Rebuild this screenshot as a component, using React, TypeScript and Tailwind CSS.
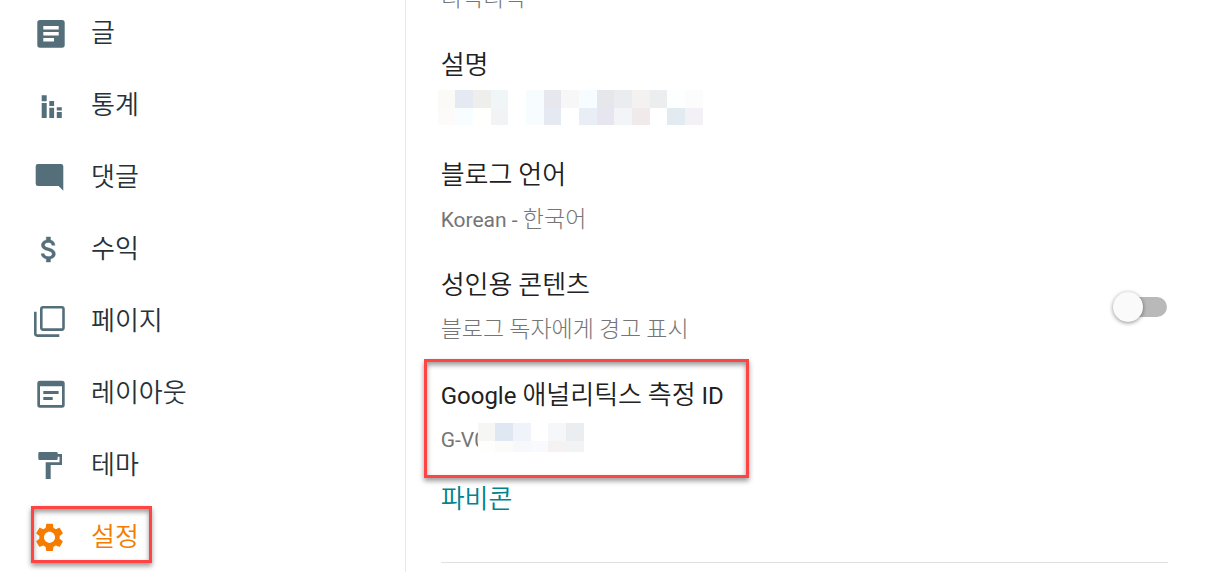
import { ReactNode, useState } from "react";

interface NavItem {
  label: string;
  icon: ReactNode;
  active?: boolean;
}

const NAV_ITEMS: NavItem[] = [
  {
    label: "글",
    icon: (
      <path
        fillRule="evenodd"
        d="M8 4h22a2.7 2.7 0 0 1 2.7 2.7v22.3a2.7 2.7 0 0 1-2.7 2.7H8a2.7 2.7 0 0 1-2.7-2.7V6.7A2.7 2.7 0 0 1 8 4zM11.3 10v3.5h15.4V10zM11.3 16v3.5h15.4V16zM11.3 22v3.5H22V22z"
      />
    ),
  },
  {
    label: "통계",
    icon: (
      <path d="M9.7 7.3h5v6h-5zM9.7 15h5v15h-5zM17.3 13h4.8v5h-4.8zM17.3 19.7h4.8V30h-4.8zM24.8 19.2h5v3.2h-5zM24.8 24h5v6h-5z" />
    ),
  },
  {
    label: "댓글",
    icon: (
      <path d="M6 4h23a2.3 2.3 0 0 1 2.3 2.3v24.5L26.6 26H6a2.3 2.3 0 0 1-2.3-2.3V6.3A2.3 2.3 0 0 1 6 4z" />
    ),
  },
  {
    label: "수익",
    icon: (
      <path
        transform="translate(0.4 0.8) scale(1.39)"
        stroke="currentColor"
        strokeWidth="0.3"
        d="M11.8 10.9c-2.27-.59-3-1.2-3-2.15 0-1.09 1.01-1.85 2.7-1.85 1.78 0 2.44.85 2.5 2.1h2.21c-.07-1.72-1.12-3.3-3.21-3.81V3h-3v2.16c-1.94.42-3.5 1.68-3.5 3.61 0 2.31 1.91 3.46 4.7 4.13 2.5.6 3 1.48 3 2.41 0 .69-.49 1.79-2.7 1.79-2.06 0-2.87-.92-2.98-2.1h-2.2c.12 2.19 1.76 3.42 3.68 3.83V21h3v-2.15c1.95-.37 3.5-1.5 3.5-3.55 0-2.84-2.43-3.81-4.7-4.4z"
      />
    ),
  },
  {
    label: "페이지",
    icon: (
      <g fill="none" stroke="currentColor" strokeWidth="2.6">
        <rect x="9.3" y="3.2" width="22.2" height="22.4" rx="1.8" />
        <path d="M3.3 7.7V29.6a2 2 0 0 0 2 2H27.3" />
      </g>
    ),
  },
  {
    label: "레이아웃",
    icon: (
      <path
        fillRule="evenodd"
        d="M8 4.7h22a2.7 2.7 0 0 1 2.7 2.7V29a2.7 2.7 0 0 1-2.7 2.7H8A2.7 2.7 0 0 1 5.3 29V7.4A2.7 2.7 0 0 1 8 4.7zM8 10.3V29h22V10.3zM11.3 15h15.3v3H11.3zM11.3 21h9.4v3h-9.4z"
      />
    ),
  },
  {
    label: "테마",
    icon: (
      <path d="M7.6 4h16.8a1.3 1.3 0 0 1 1.3 1.3V6H30v11H18.7v14h-5V14.3h13.8V8.7h-1.8v2a1.3 1.3 0 0 1-1.3 1.3H7.6a1.3 1.3 0 0 1-1.3-1.3V5.3A1.3 1.3 0 0 1 7.6 4z" />
    ),
  },
  {
    label: "설정",
    active: true,
    icon: (
      <path
        transform="translate(0.5 0.3) scale(1.42)"
        d="M19.14 12.94c.04-.3.06-.61.06-.94 0-.32-.02-.64-.07-.94l2.03-1.58c.18-.14.23-.41.12-.61l-1.92-3.32c-.12-.22-.37-.29-.59-.22l-2.39.96c-.5-.38-1.03-.7-1.62-.94l-.36-2.54c-.04-.24-.24-.41-.48-.41h-3.84c-.24 0-.43.17-.47.41l-.36 2.54c-.59.24-1.13.57-1.62.94l-2.39-.96c-.22-.08-.47 0-.59.22L2.74 8.87c-.12.21-.08.47.12.61l2.03 1.58c-.05.3-.09.63-.09.94s.02.64.07.94l-2.03 1.58c-.18.14-.23.41-.12.61l1.92 3.32c.12.22.37.29.59.22l2.39-.96c.5.38 1.03.7 1.62.94l.36 2.54c.05.24.24.41.48.41h3.84c.24 0 .44-.17.47-.41l.36-2.54c.59-.24 1.13-.56 1.62-.94l2.39.96c.22.08.47 0 .59-.22l1.92-3.32c.12-.22.07-.47-.12-.61l-2.01-1.58zM12 15.9c-2.15 0-3.9-1.75-3.9-3.9s1.75-3.9 3.9-3.9 3.9 1.75 3.9 3.9-1.75 3.9-3.9 3.9z"
      />
    ),
  },
];

const DESCRIPTION_CELLS = [
  "bg-[#fbfaf6]", "bg-[#e4e9f2]", "bg-[#eeeeec]", "bg-[#f0f5f8]", "bg-white",
  "bg-[#f7fcff]", "bg-[#e7e8ed]", "bg-[#f7f7f7]", "bg-[#f6fcff]", "bg-[#e5e7eb]",
  "bg-[#eaecef]", "bg-[#f4f2f0]", "bg-[#ebedee]", "bg-[#fdffff]", "bg-[#fcfcfc]",
  "bg-[#fcfbfa]", "bg-[#f8fdff]", "bg-[#fffffd]", "bg-[#f2f3f4]", "bg-white",
  "bg-[#f7fcff]", "bg-[#e5e9f2]", "bg-white", "bg-[#e9edf6]", "bg-[#e7e6f0]",
  "bg-[#f2f4f8]", "bg-[#f0ebea]", "bg-white", "bg-[#e1ebf1]", "bg-[#f3f1f6]",
];

const ID_CELLS = [
  "bg-[#f6f6f4]", "bg-[#dfe8f2]", "bg-[#f0f4fa]", "bg-white", "bg-[#f6f7f9]", "bg-[#eaeef1]",
  "bg-[#fefefc]", "bg-[#fbfbf9]", "bg-[#f7f8fb]", "bg-[#f9fafd]", "bg-[#f6f2f1]", "bg-[#f1f3f5]",
];

const HIGHLIGHT =
  "pointer-events-none absolute border-3 border-[#ff4444] shadow-[0_3px_5px_rgba(0,0,0,0.4),inset_0_3px_5px_rgba(0,0,0,0.4)]";

function Sidebar() {
  return (
    <nav className="w-1/3 shrink-0 border-r border-[#e8e8e8]">
      <ul className="-mt-0.5">
        {NAV_ITEMS.map((item) => (
          <li key={item.label} className="relative">
            <a
              href="#"
              className={`flex h-18 items-center gap-[23px] pl-8 text-[26px] ${
                item.active ? "text-[#f57c00]" : "text-[#263238]"
              }`}
            >
              <svg
                viewBox="0 0 36 36"
                fill="currentColor"
                aria-hidden="true"
                className={`size-9 shrink-0 ${item.active ? "" : "text-[#546e7a]"}`}
              >
                {item.icon}
              </svg>
              <span className="pb-1.5 leading-9">{item.label}</span>
            </a>
            {item.active && <div className={`${HIGHLIGHT} top-1 left-[31px] h-[57px] w-[121px]`} />}
          </li>
        ))}
      </ul>
    </nav>
  );
}

function Setting({ title, children }: { title: ReactNode; children: ReactNode }) {
  return (
    <div className="mb-5">
      <h2 className="text-[26px] leading-[45px] text-[#212121]">{title}</h2>
      <div className="h-[45px] text-[23px] leading-[45px] font-light text-[#757575]">{children}</div>
    </div>
  );
}

export default function App() {
  const [adult, setAdult] = useState(false);

  return (
    <div className="flex h-screen overflow-hidden bg-white font-['Noto_Sans_CJK_KR',sans-serif] font-[350]">
      <Sidebar />
      <main className="min-w-0 flex-1 pr-[49px] pl-[35px]">
        <div className="-mt-[26px] mb-[21px] h-[45px] text-[23px] leading-[45px] font-light text-[#757575]">
          디덕디덕
        </div>

        <Setting title="설명">
          <div className="-ml-[3px] grid w-[265px] grid-cols-15 grid-rows-[18px_17px] pt-[5px]">
            {DESCRIPTION_CELLS.map((cell, i) => (
              <div key={i} className={cell} />
            ))}
          </div>
        </Setting>

        <Setting title="블로그 언어">
          <span className="font-[Roboto] text-[21px] font-normal">Korean - </span>한국어
        </Setting>

        <div className="flex items-center justify-between">
          <Setting title={<label htmlFor="adult">성인용 콘텐츠</label>}>블로그 독자에게 경고 표시</Setting>
          <input
            id="adult"
            type="checkbox"
            role="switch"
            checked={adult}
            onChange={(e) => setAdult(e.target.checked)}
            className="mr-px mb-4 flex h-5 w-12 appearance-none items-center rounded-full bg-[#b9b9b9] before:-ml-1.5 before:size-[30px] before:rounded-full before:bg-[#fafafa] before:shadow-[0_1px_4px_rgba(0,0,0,0.45)] checked:bg-[#fbbd80] checked:before:ml-6 checked:before:bg-[#f57c00]"
          />
        </div>

        <div className="relative">
          <Setting
            title={
              <>
                <span className="font-[Roboto] text-2xl font-normal">Google </span>애널리틱스 측정
                <span className="font-[Roboto] text-2xl font-normal"> ID</span>
              </>
            }
          >
            <div className="flex">
              <span className="w-[37px] overflow-hidden font-[Roboto] text-[21px] leading-[50px] font-normal whitespace-nowrap">
                G-V0
              </span>
              <div className="grid w-[106px] grid-cols-6 grid-rows-[18px_11px] self-start pt-2">
                {ID_CELLS.map((cell, i) => (
                  <div key={i} className={cell} />
                ))}
              </div>
            </div>
          </Setting>
          <div className={`${HIGHLIGHT} -top-[11px] -left-[17px] h-[119px] w-[325px]`} />
        </div>

        <a href="#" className="block text-[26px] leading-[34px] text-[#00838f]">
          파비콘
        </a>
        <hr className="mt-12 border-[#e0e0e0]" />
      </main>
    </div>
  );
}
